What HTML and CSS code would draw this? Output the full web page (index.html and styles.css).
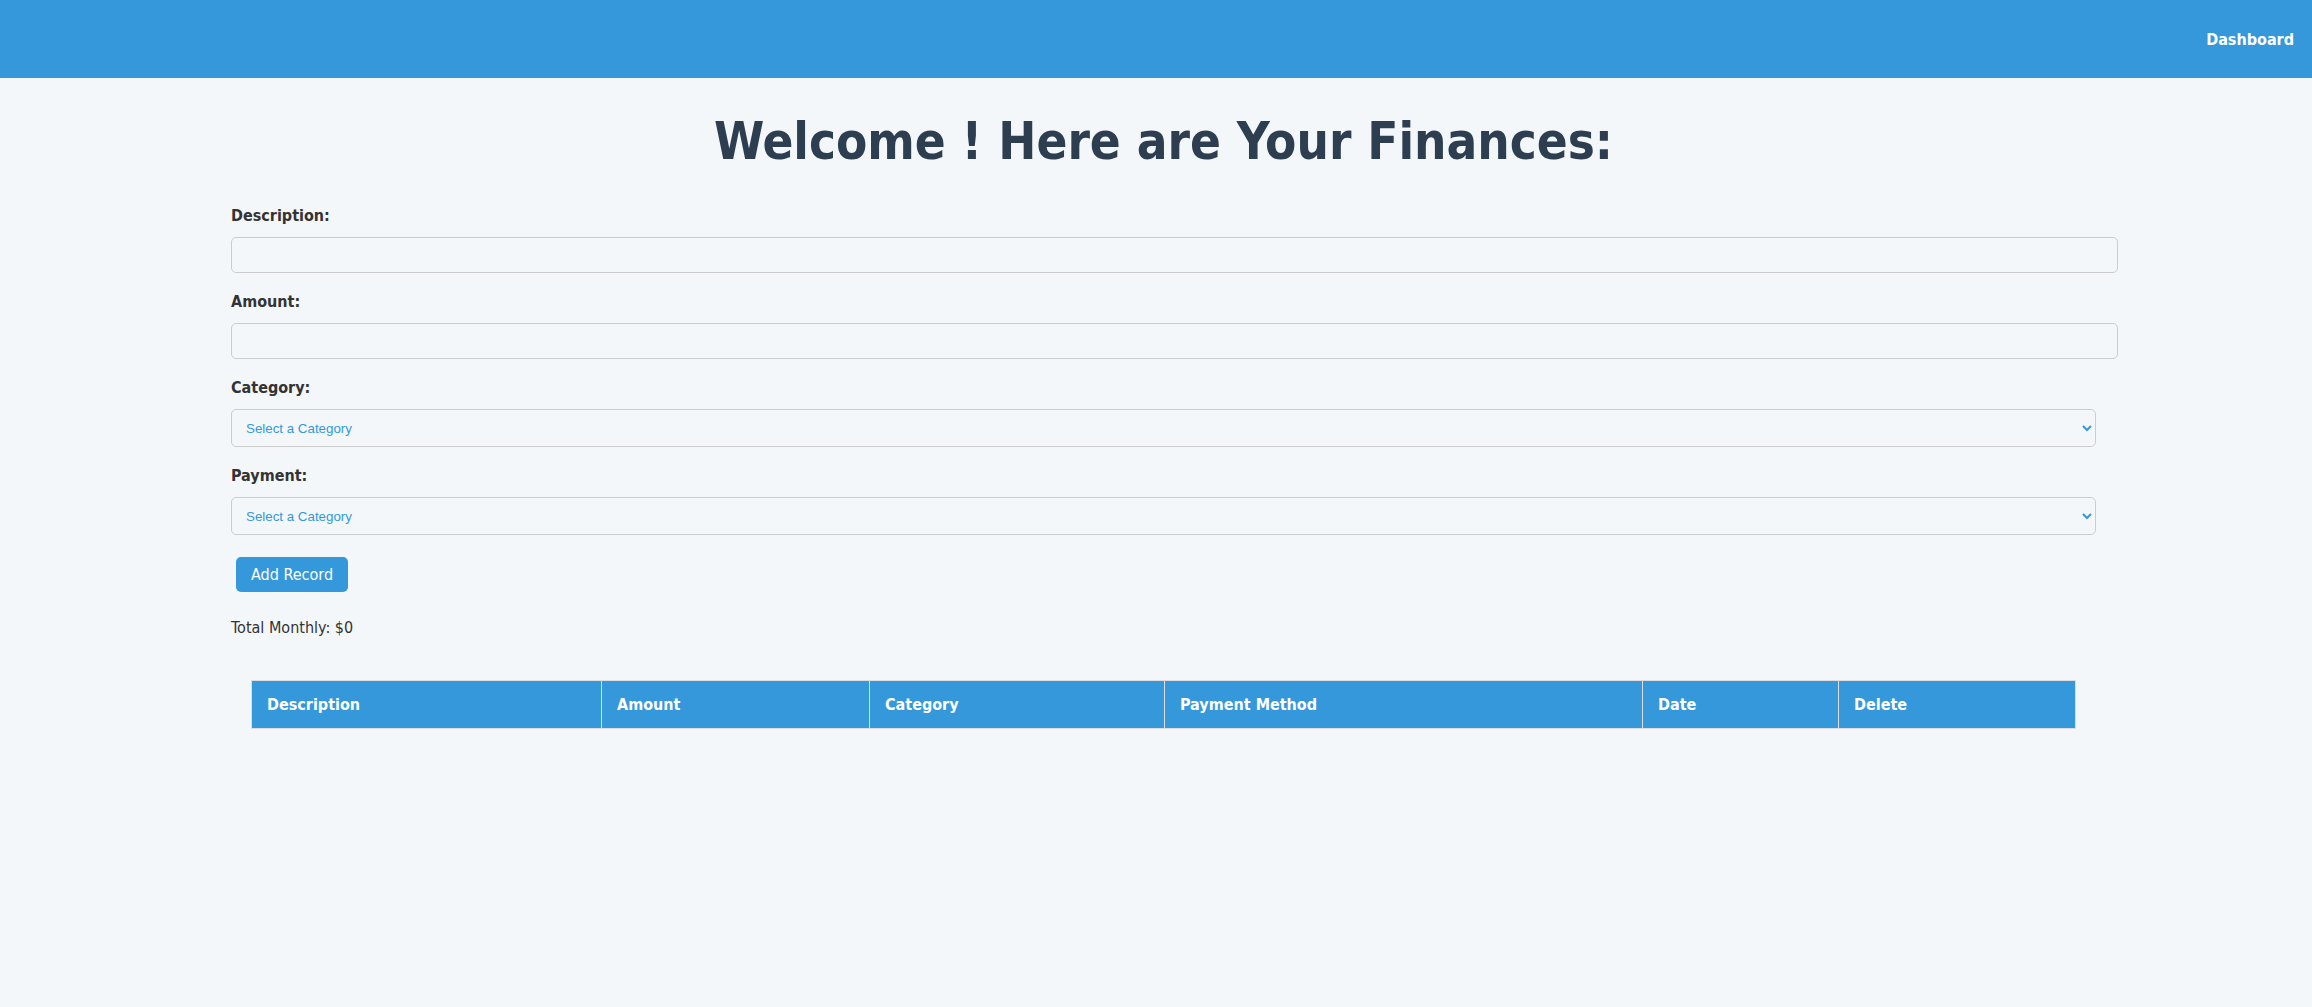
FILE: index.html
```html
<!DOCTYPE html>
<html lang="en">
<head>
<meta charset="utf-8">
<title>Finances</title>
<link rel="stylesheet" href="styles.css">
</head>
<body>
<header class="topbar">
  <nav class="nav">
    <a class="nav-link" href="#">Dashboard</a>
  </nav>
</header>
<main class="container">
  <h1 class="title">Welcome ! Here are Your Finances:</h1>
  <form class="record-form">
    <label class="field-label" for="desc">Description:</label>
    <input class="text-input" id="desc" type="text">
    <label class="field-label" for="amount">Amount:</label>
    <input class="text-input" id="amount" type="text">
    <label class="field-label" for="category">Category:</label>
    <select class="select-input" id="category">
      <option>Select a Category</option>
    </select>
    <label class="field-label" for="payment">Payment:</label>
    <select class="select-input" id="payment">
      <option>Select a Category</option>
    </select>
    <button class="add-btn" type="button">Add Record</button>
  </form>
  <p class="total">Total Monthly: $0</p>
  <table class="records">
    <thead>
      <tr>
        <th class="col-desc">Description</th>
        <th class="col-amount">Amount</th>
        <th class="col-category">Category</th>
        <th class="col-payment">Payment Method</th>
        <th class="col-date">Date</th>
        <th class="col-delete">Delete</th>
      </tr>
    </thead>
    <tbody></tbody>
  </table>
</main>
</body>
</html>
```
FILE: styles.css
```css
html, body {
  margin: 0;
  padding: 0;
}
body {
  background: #f4f7fa;
  font-family: "DejaVu Sans Condensed", "DejaVu Sans", sans-serif;
  font-stretch: condensed;
  color: #333;
  font-size: 16px;
}
.topbar {
  background: #3498db;
  height: 78px;
}
.nav {
  height: 100%;
  display: flex;
  justify-content: flex-end;
  align-items: center;
  padding: 0 18px;
}
.nav-link {
  color: #fff;
  font-weight: bold;
  text-decoration: none;
  font-size: 16px;
}
.container {
  width: 1865px;
  margin-left: 231px;
  display: flex;
  flex-direction: column;
}
.title {
  margin: 34px 0 34px;
  font-size: 50.7px;
  line-height: 60px;
  color: #2c3e50;
  text-align: center;
}
.record-form {
  display: flex;
  flex-direction: column;
  align-items: flex-start;
}
.field-label {
  font-weight: bold;
  line-height: 20px;
  margin-bottom: 11px;
  color: #333;
}
.text-input {
  box-sizing: content-box;
  width: 100%;
  padding: 8px 10px;
  height: 18px;
  border: 1px solid #ccc;
  border-radius: 5px;
  background: transparent;
  margin: 0 0 19px;
  font-size: 16px;
}
.select-input {
  box-sizing: border-box;
  width: 100%;
  height: 38px;
  padding: 0 10px;
  border: 1px solid #ccc;
  border-radius: 5px;
  background: transparent;
  color: #3498db;
  font-family: "Liberation Sans", Arial, sans-serif;
  font-size: 13.33px;
  margin: 0 0 19px;
}
.add-btn {
  margin: 3px 0 0 5px;
  background: #3498db;
  color: #fff;
  border: none;
  border-radius: 5px;
  padding: 8px 15px;
  line-height: 19px;
  font-family: "DejaVu Sans Condensed", "DejaVu Sans", sans-serif;
  font-stretch: condensed;
  font-size: 16px;
}
.total {
  margin: 26px 0 0;
  line-height: 20px;
}
.records {
  margin: 42px 20px 0;
  width: 1825px;
  border-collapse: collapse;
  table-layout: fixed;
}
.records th {
  background: #3498db;
  color: #fff;
  text-align: left;
  font-weight: bold;
  padding: 15px 15px;
  line-height: 17px;
  border: 1px solid #ddd;
}
.col-desc { width: 319px; }
.col-amount { width: 237px; }
.col-category { width: 264px; }
.col-payment { width: 447px; }
.col-date { width: 165px; }
.col-delete { width: 206px; }
```
